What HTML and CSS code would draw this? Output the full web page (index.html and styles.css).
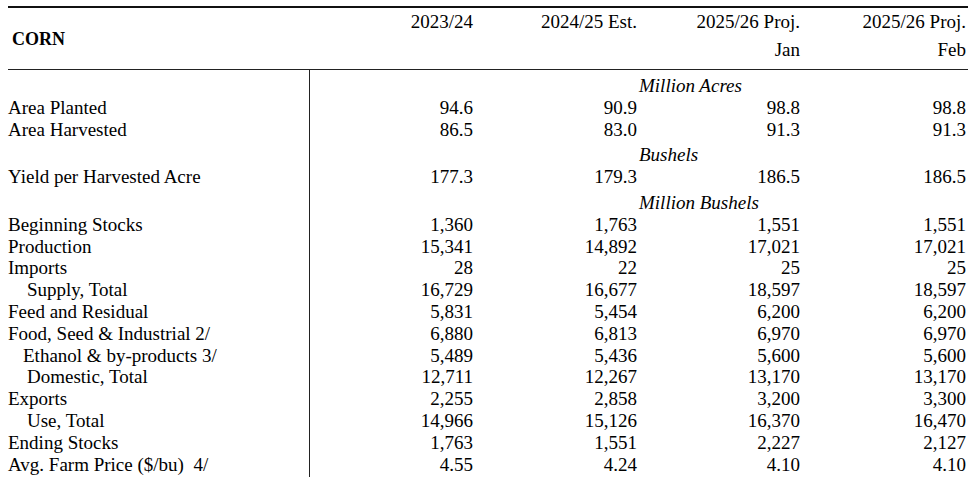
FILE: index.html
```html
<!DOCTYPE html>
<html lang="en">
<head>
<meta charset="utf-8">
<title>Corn</title>
<link rel="stylesheet" href="styles.css">
</head>
<body>
<div class="sheet">
  <div class="head">
    <div class="title">CORN</div>
    <div class="h c1">2023/24</div>
    <div class="h c2">2024/25 Est.</div>
    <div class="h c3">2025/26 Proj.</div>
    <div class="h c4">2025/26 Proj.</div>
    <div class="h c3 r2">Jan</div>
    <div class="h c4 r2">Feb</div>
  </div>
  <div class="body">
    <div class="row"><div class="unit">Million Acres</div></div>
    <div class="row"><div class="lbl">Area Planted</div><div class="n">94.6</div><div class="n">90.9</div><div class="n">98.8</div><div class="n">98.8</div></div>
    <div class="row"><div class="lbl">Area Harvested</div><div class="n">86.5</div><div class="n">83.0</div><div class="n">91.3</div><div class="n">91.3</div></div>
    <div class="row gap"><div class="unit">Bushels</div></div>
    <div class="row"><div class="lbl">Yield per Harvested Acre</div><div class="n">177.3</div><div class="n">179.3</div><div class="n">186.5</div><div class="n">186.5</div></div>
    <div class="row gap"><div class="unit">Million Bushels</div></div>
    <div class="row"><div class="lbl">Beginning Stocks</div><div class="n">1,360</div><div class="n">1,763</div><div class="n">1,551</div><div class="n">1,551</div></div>
    <div class="row"><div class="lbl">Production</div><div class="n">15,341</div><div class="n">14,892</div><div class="n">17,021</div><div class="n">17,021</div></div>
    <div class="row"><div class="lbl">Imports</div><div class="n">28</div><div class="n">22</div><div class="n">25</div><div class="n">25</div></div>
    <div class="row"><div class="lbl ind">Supply, Total</div><div class="n">16,729</div><div class="n">16,677</div><div class="n">18,597</div><div class="n">18,597</div></div>
    <div class="row"><div class="lbl">Feed and Residual</div><div class="n">5,831</div><div class="n">5,454</div><div class="n">6,200</div><div class="n">6,200</div></div>
    <div class="row"><div class="lbl">Food, Seed &amp; Industrial 2/</div><div class="n">6,880</div><div class="n">6,813</div><div class="n">6,970</div><div class="n">6,970</div></div>
    <div class="row"><div class="lbl ind2">Ethanol &amp; by-products 3/</div><div class="n">5,489</div><div class="n">5,436</div><div class="n">5,600</div><div class="n">5,600</div></div>
    <div class="row"><div class="lbl ind">Domestic, Total</div><div class="n">12,711</div><div class="n">12,267</div><div class="n">13,170</div><div class="n">13,170</div></div>
    <div class="row"><div class="lbl">Exports</div><div class="n">2,255</div><div class="n">2,858</div><div class="n">3,200</div><div class="n">3,300</div></div>
    <div class="row"><div class="lbl ind">Use, Total</div><div class="n">14,966</div><div class="n">15,126</div><div class="n">16,370</div><div class="n">16,470</div></div>
    <div class="row"><div class="lbl">Ending Stocks</div><div class="n">1,763</div><div class="n">1,551</div><div class="n">2,227</div><div class="n">2,127</div></div>
    <div class="row"><div class="lbl">Avg. Farm Price ($/bu)&nbsp; 4/</div><div class="n">4.55</div><div class="n">4.24</div><div class="n">4.10</div><div class="n">4.10</div></div>
  </div>
</div>
</body>
</html>
```

FILE: styles.css
```css
html, body {
  margin: 0;
  padding: 0;
  background: #fff;
}

body {
  font-family: "Liberation Serif", "Times New Roman", serif;
  font-size: 19px;
  color: #000;
}

.sheet {
  width: 960px;
  margin: 6px 0 0 8px;
}

.head {
  display: grid;
  grid-template-columns: 302px 165px 164px 163px 166px;
  grid-template-rows: 21.8px 21.8px;
  row-gap: 6.6px;
  padding: 3px 0 7.8px;
  border-top: 2px solid #111;
  border-bottom: 1px solid #222;
  line-height: 21.8px;
}

.title {
  grid-column: 1;
  grid-row: 1 / 3;
  align-self: center;
  padding: 8px 0 0 4px;
  font-weight: bold;
  font-size: 18px;
}

.h {
  grid-row: 1;
  text-align: right;
  padding-right: 2px;
  white-space: nowrap;
}

.h.r2 { grid-row: 2; }
.c1 { grid-column: 2; }
.c2 { grid-column: 3; }
.c3 { grid-column: 4; }
.c4 { grid-column: 5; }

.body {
  padding: 5px 0 2px;
  background: linear-gradient(#222, #222) no-repeat 301px 0 / 1px 100%;
}

.row {
  display: grid;
  grid-template-columns: 302px 165px 164px 163px 166px;
  line-height: 21.8px;
  height: 21.8px;
}

.row.gap { margin-top: 4px; }

.lbl {
  grid-column: 1;
  white-space: nowrap;
}

.lbl.ind { padding-left: 19px; }
.lbl.ind2 { padding-left: 15px; }

.n {
  text-align: right;
  padding-right: 2px;
}

.unit {
  grid-column: 4 / 6;
  font-style: italic;
  white-space: nowrap;
}
```
